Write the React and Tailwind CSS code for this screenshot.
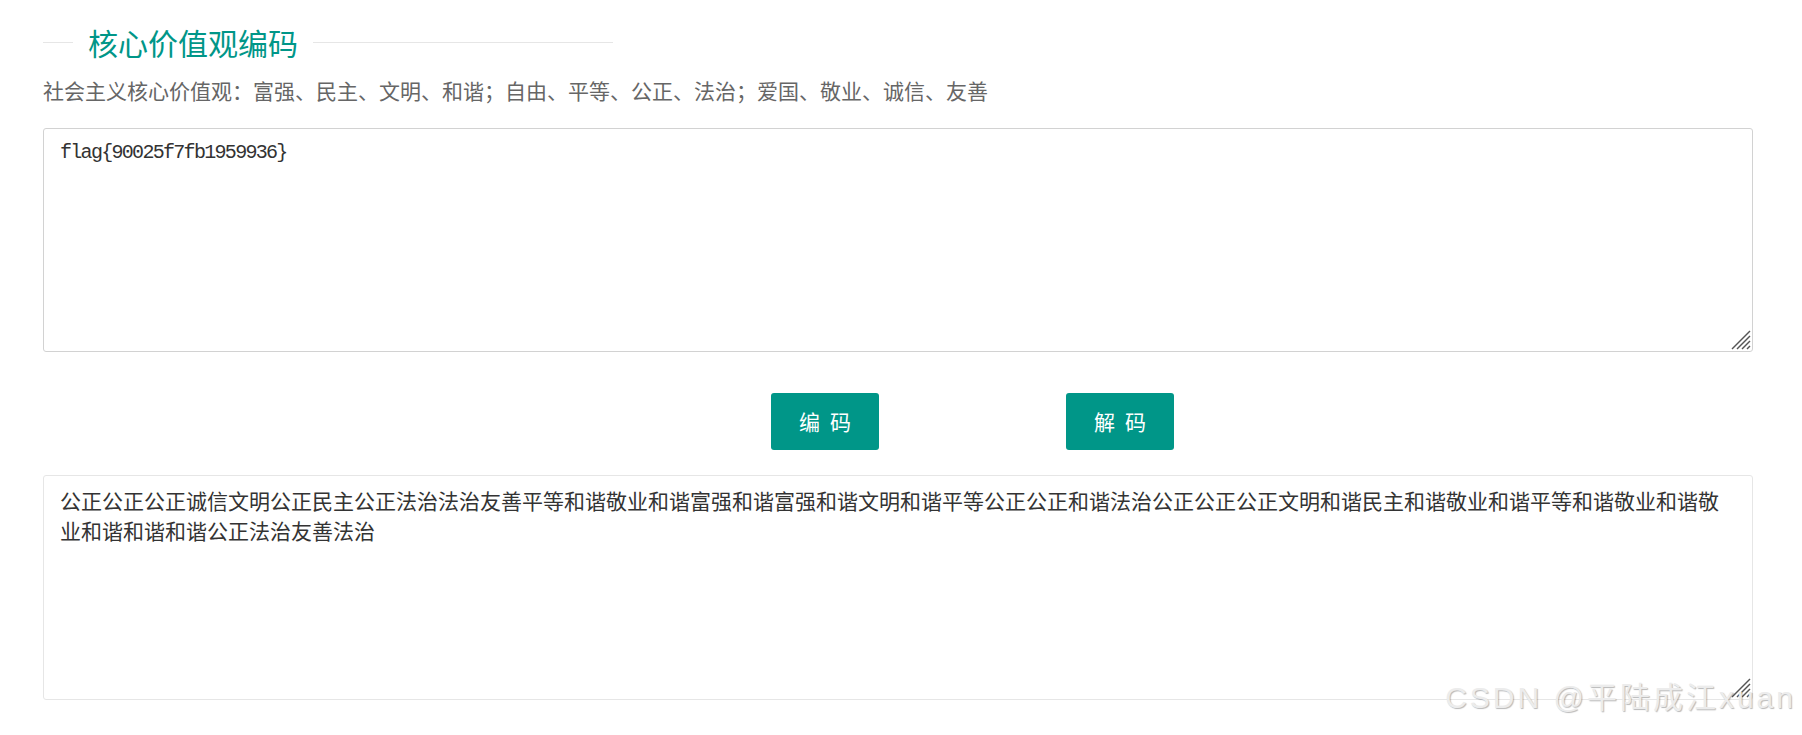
import { useState } from "react";

const encoded =
	"公正公正公正诚信文明公正民主公正法治法治友善平等和谐敬业和谐富强和谐富强和谐文明和谐平等公正公正和谐法治公正公正公正文明和谐民主和谐敬业和谐平等和谐敬业和谐敬业和谐和谐和谐公正法治友善法治";

const Grip = () => (
	<svg
		className="pointer-events-none absolute bottom-[2px] right-[2px]"
		width="22"
		height="22"
		viewBox="0 0 22 22"
	>
		<g stroke="#555" strokeWidth="1.4">
			<line x1="3" y1="21" x2="21" y2="3" />
			<line x1="8" y1="21" x2="21" y2="8" />
			<line x1="13" y1="21" x2="21" y2="13" />
			<line x1="18" y1="21" x2="21" y2="18" />
		</g>
	</svg>
);

const Btn = ({ a, b }) => (
	<button className="flex h-[57px] w-[108px] items-center justify-center gap-[10px] rounded-[3px] bg-[#009688] text-[21px] text-white">
		<span>{a}</span>
		<span>{b}</span>
	</button>
);

const App = () => {
	const [plain, setPlain] = useState("flag{90025f7fb1959936}");
	const [result, setResult] = useState(encoded);

	return (
		<div className="relative h-[735px] w-full overflow-hidden bg-white pl-[43px] pr-[49px] font-['Noto_Sans_CJK_SC',sans-serif]">
			{/* title with side lines */}
			<div className="mt-[20px] flex h-[45px] w-[570px] items-center">
				<div className="h-px w-[30px] bg-[#e6e6e6]" />
				<h2 className="px-[15px] text-[30px] leading-[45px] text-[#009688]">核心价值观编码</h2>
				<div className="h-px flex-1 bg-[#e6e6e6]" />
			</div>

			<p className="mt-[9px] text-[21px] leading-[32px] text-[#666]">
				社会主义核心价值观：富强、民主、文明、和谐；自由、平等、公正、法治；爱国、敬业、诚信、友善
			</p>

			<div className="relative mt-[22px]">
				<textarea
					value={plain}
					onChange={(e) => setPlain(e.target.value)}
					className="block h-[224px] w-full resize-none rounded-[3px] border border-[#d2d2d2] px-[16px] py-[9px] font-['Liberation_Mono',monospace] text-[20px] leading-[30px] tracking-[-1.7px] text-[#333] outline-none"
				/>
				<Grip />
			</div>

			<div className="mt-[41px] flex h-[57px] items-center gap-[187px] pl-[728px]">
				<Btn a="编" b="码" />
				<Btn a="解" b="码" />
			</div>

			<div className="relative mt-[25px]">
				<textarea
					value={result}
					onChange={(e) => setResult(e.target.value)}
					className="block h-[225px] w-full resize-none rounded-[3px] border border-[#e6e6e6] px-[16px] py-[9px] font-['Noto_Sans_CJK_SC',sans-serif] text-[21px] leading-[30px] text-[#333] outline-none"
				/>
				<Grip />
			</div>

			{/* watermark */}
			<div className="absolute bottom-[22px] right-[6px] font-['Liberation_Sans','Noto_Sans_CJK_SC',sans-serif] text-[30px] leading-none tracking-[3px] text-[#ececec] [text-shadow:1px_1px_1px_rgba(0,0,0,0.28)]">
				CSDN @平陆成江xuan
			</div>
		</div>
	);
};

export default App;
